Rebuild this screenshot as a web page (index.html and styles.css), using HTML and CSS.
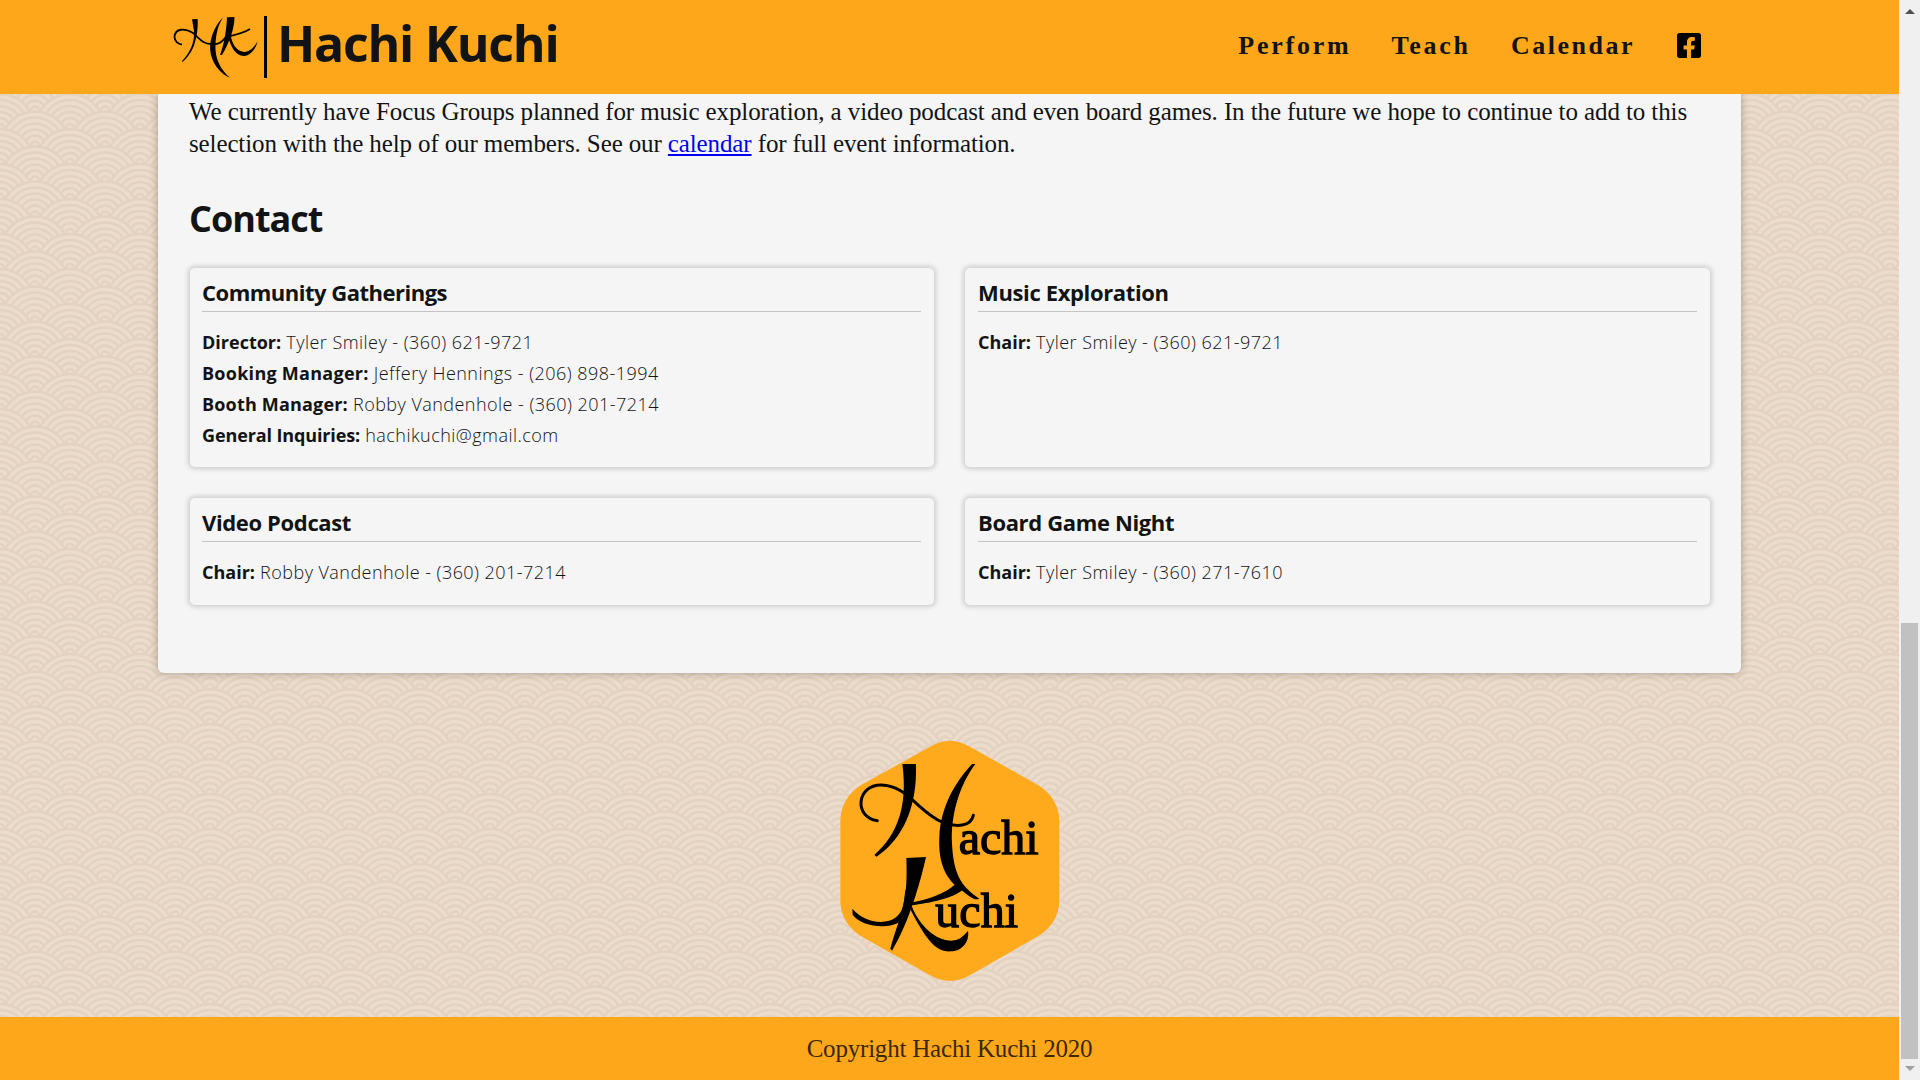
FILE: index.html
```html
<!DOCTYPE html>
<html lang="en">
<head>
<meta charset="utf-8">
<title>Hachi Kuchi</title>
<link rel="stylesheet" href="styles.css">
</head>
<body>
<div class="page">
  <header class="site-header">
    <div class="brand">
      <svg class="brand-mark" width="86" height="64" viewBox="0 0 86 64">
        <path class="stroke" d="M9 28.600C5 28 1.500 25 1.500 21C2 12 12 12 20 17C27 23 30 28 38 28C48 29 50 24 53 21C62 19 71 17 77 13"/>
        <path d="M19 3.200L24.600 3C25.400 13 23 25 20 32C17 38 14 42 9.500 46L9 45C16 38 22 27 21 15Z"/>
        <path d="M50 1.500C40 11 35 27 38 39C41 50 48 58 57 61.800C48 54 41.500 43 42.500 28C43 18 45 9 50 1.500Z"/>
        <path d="M54 1.200L61.500 1C61.500 13 56 27 49 39L47 39C51 29 53.500 14 54 1.200Z"/>
        <path d="M55 21L58 21C60 31 66 36 72 36C78 35 81 31 84.500 25.500C83 33 77 40 71 40C62 40 58 30 55 21Z"/>
      </svg>
      <span class="brand-bar"></span>
      <span class="brand-name">Hachi Kuchi</span>
    </div>
    <nav class="nav">
      <a class="perform">Perform</a><a class="teach">Teach</a><a class="cal">Calendar</a>
      <svg class="fb" width="24" height="25" viewBox="0 32 448 448" preserveAspectRatio="none"><path d="M400 32H48A48 48 0 0 0 0 80v352a48 48 0 0 0 48 48h137.250V327.690h-63V256h63v-54.640c0-62.150 37-96.480 93.670-96.480 27.140 0 55.520 4.840 55.520 4.840v61h-31.270c-30.810 0-40.420 19.120-40.420 38.730V256h68.780l-11 71.690h-57.780V480H400a48 48 0 0 0 48-48V80a48 48 0 0 0-48-48z"/></svg>
    </nav>
  </header>
  <main class="content">
    <p class="intro"><span class="line one">We currently have Focus Groups planned for music exploration, a video podcast and even board games. In the future we hope to continue to add to this</span><span class="line two">selection with the help of our members. See our <a href="#">calendar</a> for full event information.</span></p>
    <h2>Contact</h2>
    <div class="cards">
      <section class="card"><h3 class="wide">Community Gatherings</h3>
        <p><b>Director:</b> Tyler Smiley - (360) 621-9721</p>
        <p><b class="booking">Booking Manager:</b> Jeffery Hennings - (206) 898-1994</p>
        <p><b class="booth">Booth Manager:</b> Robby Vandenhole - (360) 201-7214</p>
        <p><b class="general">General Inquiries:</b> hachikuchi@gmail.com</p></section>
      <section class="card"><h3>Music Exploration</h3><p><b>Chair:</b> Tyler Smiley - (360) 621-9721</p></section>
      <section class="card"><h3>Video Podcast</h3><p><b>Chair:</b> Robby Vandenhole - (360) 201-7214</p></section>
      <section class="card"><h3>Board Game Night</h3><p><b>Chair:</b> Tyler Smiley - (360) 271-7610</p></section>
    </div>
  </main>
  <svg class="badge" width="220" height="242" viewBox="0 0 660 726">
    <path fill="#ffaa1d" d="M270 20Q330-16 390 20L595 136Q655 174 658 240V486Q655 550 595 588L390 706Q330 740 270 706L62 588Q4 550 1 486V240Q4 174 62 136Z"/>
    <path class="thick" d="M112 242C40 232 50 134 124 135C202 136 238 220 310 248C350 262 392 260 400 226"/>
    <path d="M187 72H228C232 200 190 295 110 350L103 345C172 284 204 200 187 72Z"/>
    <path d="M396 72H406C356 138 332 230 336 310C340 400 362 440 418 476C402 484 384 464 366 452C318 420 294 370 298 290C302 204 342 130 396 72Z"/>
    <path d="M199 354L258 351C240 430 208 545 156 632L151 626C158 600 168 568 178 540C198 480 202 430 199 354Z"/>
    <path d="M37 506C76 550 138 556 168 532C192 514 192 480 196 450L226 450C220 500 206 530 180 546C140 570 60 558 38 524Z"/>
    <path d="M210 488C262 480 314 462 347 432L372 446C340 476 270 488 214 496Z"/>
    <path d="M216 500C240 560 290 602 334 602C360 600 370 588 384 572C390 610 360 634 334 634C286 638 256 594 210 506Z"/>
    <text class="word" x="356" y="342" textLength="240" lengthAdjust="spacingAndGlyphs">achi</text>
    <text class="word" x="286" y="560" textLength="248" lengthAdjust="spacingAndGlyphs">uchi</text>
  </svg>
  <footer class="site-footer"><span>Copyright Hachi Kuchi 2020</span></footer>
</div>
<div class="scrollbar"><i class="up"></i><i class="thumb"></i><i class="down"></i></div>
</body>
</html>
```
FILE: styles.css
```css
*{box-sizing:border-box}
body{margin:0;height:1080px;overflow:hidden;display:flex;color:#111314;font-family:"Open Sans","Noto Sans",sans-serif;background:#ecdccc}
.page{width:1899px;height:1080px;display:flex;flex-direction:column;align-items:center;background-color:#ecdccc;background-image:url("data:image/svg+xml,%3Csvg xmlns='http://www.w3.org/2000/svg' width='70' height='35' viewBox='0 0 70 35'%3E%3Cdefs%3E%3Cg id='c' fill='%23ecdccc' stroke='%23e3d2c1' stroke-width='2.4'%3E%3Ccircle r='34'/%3E%3Ccircle r='28'/%3E%3Ccircle r='22'/%3E%3Ccircle r='16'/%3E%3Ccircle r='10'/%3E%3Ccircle r='4'/%3E%3C/g%3E%3C/defs%3E%3Cuse href='%23c' x='0' y='-1'/%3E%3Cuse href='%23c' x='70' y='-1'/%3E%3Cuse href='%23c' x='35' y='16.500'/%3E%3Cuse href='%23c' x='0' y='34'/%3E%3Cuse href='%23c' x='70' y='34'/%3E%3Cuse href='%23c' x='35' y='51.500'/%3E%3Cuse href='%23c' x='0' y='69'/%3E%3Cuse href='%23c' x='70' y='69'/%3E%3C/svg%3E");background-position:0 24px}
.site-header{width:100%;height:94px;flex:none;background:#ffa71a;display:flex;justify-content:space-between;padding:0 198.5px 0 173px;z-index:1}
.brand{display:flex;align-items:flex-start;padding-top:16px}
.brand-mark{flex:none}
.stroke{fill:none;stroke:#000;stroke-width:1.8}
.brand-bar{width:3px;height:62px;background:#000;margin-left:5px}
.brand-name{font-weight:700;font-size:50px;line-height:54px;letter-spacing:-1.25px;margin-left:10px;white-space:nowrap}
.nav{display:flex;align-items:center;height:92px;font:700 26px "Liberation Serif",serif;letter-spacing:2.75px;white-space:nowrap}
.nav a{margin-right:40.200px}
.nav .cal{letter-spacing:2.5px;margin-right:41.5px}
.fb{margin-top:-1px}
.content{width:1583px;height:579px;flex:none;background:#f5f5f5;border-radius:0 0 6px 6px;box-shadow:0 0 8px rgba(0,0,0,.3);padding:2px 31px 1px}
.intro{margin:0;font:25px/32px "Liberation Serif",serif;letter-spacing:-.1px}
.line{display:block;white-space:nowrap}
.two{letter-spacing:-.12px}
.intro a{color:#0000ee}
h2{margin:34px 0 0;font-size:36px;line-height:50px;letter-spacing:-1px}
.cards{display:grid;grid-template-columns:744px 745px;gap:31px;grid-template-rows:199px 107px;margin:24px 0 0 1px}
.card{border-radius:5px;box-shadow:0 0 5px 2px rgba(0,0,0,.16);padding:9px 13px 9px 12px}
.card:nth-child(even){padding-left:13px}
h3{margin:0 0 15px;font-size:22px;line-height:31px;height:35px;border-bottom:1px solid #c4c4c4;letter-spacing:-.36px}
h3.wide{letter-spacing:-.5px}
.card p{margin:0;font-size:18px;line-height:31px;font-weight:300;letter-spacing:.46px}
.card b{font-weight:700;letter-spacing:0}
.card .booking{letter-spacing:.27px}
.card .booth{letter-spacing:.18px}
.card .general{letter-spacing:-.12px}
.badge{margin:67px 0 0 1px;flex:none}
.thick{fill:none;stroke:#000;stroke-width:9;stroke-linecap:round}
.word{font:146px "Liberation Serif",serif;stroke:#000;stroke-width:4}
.site-footer{margin-top:auto;width:100%;height:63px;flex:none;background:#ffa71a;text-align:center;font:25px/63px "Liberation Serif",serif;letter-spacing:-.2px;color:#392706}
.scrollbar{width:21px;height:1080px;background:#f0f0f0;display:flex;flex-direction:column;align-items:center}
.up,.down{border:5px solid transparent}
.up{border-top:0;border-bottom-color:#505050;margin-top:9px}
.thumb{width:17px;height:436px;background:#c1c1c1;margin-top:609px}
.down{border-bottom:0;border-top-color:#a0a0a0;margin-top:7px}
```
